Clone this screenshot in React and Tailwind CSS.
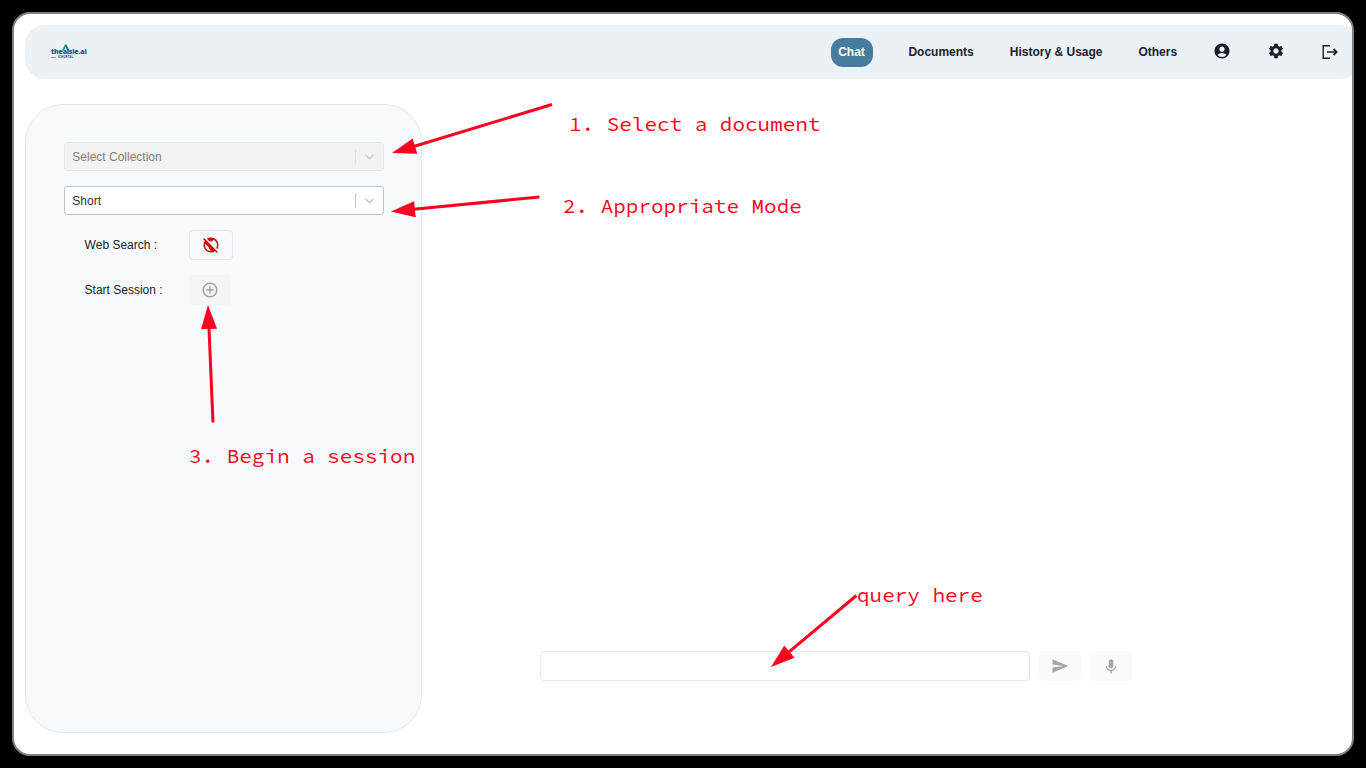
import { MdAccountCircle, MdSettings, MdPublicOff, MdAddCircleOutline, MdSend } from "react-icons/md";

function Select({ label, disabled }) {
  return (
    <div className={`flex h-[29px] w-80 items-center rounded-[3px] border text-xs ${disabled ? "border-[#e6e6e6] bg-[#f2f2f2] text-[#808080]" : "border-[#c4c4c4] bg-white text-[#333333]"}`}>
      <span className="flex-1 pl-[7.3px]">{label}</span>
      <span className={`h-[15px] w-px ${disabled ? "bg-[#e0e0e0]" : "bg-[#c4c4c4]"}`} />
      <span className="flex w-[27px] justify-center">
        <svg width="15" height="15" viewBox="0 0 20 20" fill="#cccccc">
          <path d="M4.516 7.548c0.436-0.446 1.043-0.481 1.576 0l3.908 3.747 3.908-3.747c0.533-0.481 1.141-0.446 1.574 0 0.436 0.445 0.408 1.197 0 1.615-0.406 0.418-4.695 4.502-4.695 4.502-0.217 0.223-0.502 0.335-0.787 0.335s-0.57-0.112-0.789-0.335c0 0-4.287-4.084-4.695-4.502s-0.436-1.17 0-1.615z" />
        </svg>
      </span>
    </div>
  );
}

function Logo() {
  return (
    <div className="relative h-4 w-9 font-['Open_Sans',sans-serif] text-[#1f5594]">
      <svg className="absolute left-[11px] top-0" width="8" height="7" viewBox="0 0 8 7" fill="none">
        <path d="M1 6.5 3.8 1" stroke="#3f9b63" strokeWidth="1.7" />
        <path d="M3.4 0.6 6.4 6.5" stroke="#22679c" strokeWidth="1.7" />
      </svg>
      <span className="absolute left-0 top-[4px] whitespace-nowrap text-[7px] font-extrabold leading-[8px] tracking-[-0.2px]">theaisle.ai</span>
      <span className="absolute left-0 top-[13px] h-px w-[5px] bg-[#7f9cbd]" />
      <span className="absolute left-[7px] top-[11px] whitespace-nowrap text-[3px] font-bold leading-[4px]">ICHORTAL</span>
    </div>
  );
}

function Arrow({ x1, y1, x2, y2 }) {
  const angle = (Math.atan2(y2 - y1, x2 - x1) * 180) / Math.PI;
  const length = Math.hypot(x2 - x1, y2 - y1);
  return (
    <g transform={`translate(${x2} ${y2}) rotate(${angle})`} fill="#ff0020">
      <path d={`M${-length} -1.5H-20V1.5H${-length}Z`} />
      <path d="M0 0-24-8V8Z" />
    </g>
  );
}

function Note({ className, children }) {
  return (
    <span className={`absolute origin-left scale-x-[1.0475] whitespace-pre font-['Source_Code_Pro','Noto_Sans_Mono_CJK_SC','DejaVu_Sans_Mono',monospace] text-[20px] leading-6 text-[#ff0020] ${className}`}>
      {children}
    </span>
  );
}

export default function App() {
  return (
    <div className="relative h-screen w-screen overflow-hidden bg-black p-3 font-['Liberation_Sans',Arial,sans-serif] text-xs text-[#1a202c]">
      <div className="flex h-[744px] w-[1342px] flex-col overflow-hidden rounded-[18px] border-2 border-[#808080] bg-white pl-[11px] pt-[11px]">
        <header className="flex h-[54px] w-[1335px] shrink-0 items-center rounded-[20px] bg-[#ecf1f5] pl-[26px] font-bold">
          <Logo />
          <nav className="ml-[744px] flex items-center whitespace-nowrap">
            <span className="flex h-[29px] w-[42px] items-center justify-center rounded-xl bg-[#457b9d] pr-px text-white">Chat</span>
            <span className="ml-[35.4px] w-[65.4px]">Documents</span>
            <span className="ml-9 w-[93px]">History &amp; Usage</span>
            <span className="ml-[35.6px] w-[38.6px]">Others</span>
          </nav>
          <MdAccountCircle size={18} className="-mt-0.5 ml-9" />
          <MdSettings size={18} className="-mt-0.5 ml-9" />
          <svg className="ml-9" width="18" height="18" viewBox="0 0 18 18" fill="none" stroke="currentColor" strokeWidth="1.4">
            <path d="M9 2.7H2.2v12.6H9M6 9h9" />
            <path d="M12.6 6 15.6 9 12.6 12" strokeWidth="1.8" />
          </svg>
        </header>

        <main className="mt-[25px] flex">
          <aside className="flex h-[629px] w-[397px] shrink-0 flex-col rounded-[38px] border border-[#e2e8f0] bg-[#f6fafd] pl-[38px] pt-[37px]">
            <Select label="Select Collection" disabled />
            <div className="h-[15px]" />
            <Select label="Short" />
            <div className="mt-[15px] flex h-[30px] items-center pl-[20.6px]">
              <span className="w-[104.4px]">Web Search :</span>
              <span className="flex h-[30px] w-11 items-center justify-center rounded border border-[#e2e8f0] text-[#cc1100]">
                <MdPublicOff size={18} />
              </span>
            </div>
            <div className="mt-[15px] flex h-[30px] items-center pl-[20.6px]">
              <span className="w-[104.4px]">Start Session :</span>
              <span className="flex h-[30px] w-[42px] items-center justify-center rounded bg-[#f3f6f9] text-[#a0a4a8]">
                <MdAddCircleOutline size={18} />
              </span>
            </div>
          </aside>
          <div className="ml-[118px] mt-[547px] flex h-[30px]">
            <div className="w-[490px] rounded border border-[#e2e8f0]" />
            <div className="ml-[9px] flex w-[42px] items-center justify-center rounded bg-[#f9fafc] text-[#a3a6ab]">
              <MdSend size={18} />
            </div>
            <div className="ml-[9px] flex w-[42px] items-center justify-center rounded bg-[#f9fafc] text-[#a3a6ab]">
              <svg width="18" height="18" viewBox="0 0 24 24" fill="currentColor">
                <path d="M12 15c1.66 0 2.99-1.34 2.99-3L15 6c0-1.66-1.34-3-3-3S9 4.34 9 6v6c0 1.66 1.34 3 3 3zm5.3-3c0 3-2.54 5.1-5.3 5.1S6.7 15 6.7 12H5c0 3.42 2.72 6.23 6 6.72V22h2v-3.28c3.28-.48 6-3.3 6-6.72h-1.7z" />
              </svg>
            </div>
          </div>
        </main>
      </div>

      <svg className="absolute inset-0" width="1366" height="768">
        <Arrow x1={552} y1={104.5} x2={392} y2={153} />
        <Arrow x1={539.5} y1={197} x2={391} y2={211.5} />
        <Arrow x1={213} y1={422.5} x2={208} y2={305} />
        <Arrow x1={856.5} y1={595.5} x2={771} y2={667} />
      </svg>
      <Note className="left-[569px] top-[112px]">1. Select a document</Note>
      <Note className="left-[563px] top-[194px]">2. Appropriate Mode</Note>
      <Note className="left-[189px] top-[444px]">3. Begin a session</Note>
      <Note className="left-[857px] top-[583px]">query here</Note>
    </div>
  );
}
